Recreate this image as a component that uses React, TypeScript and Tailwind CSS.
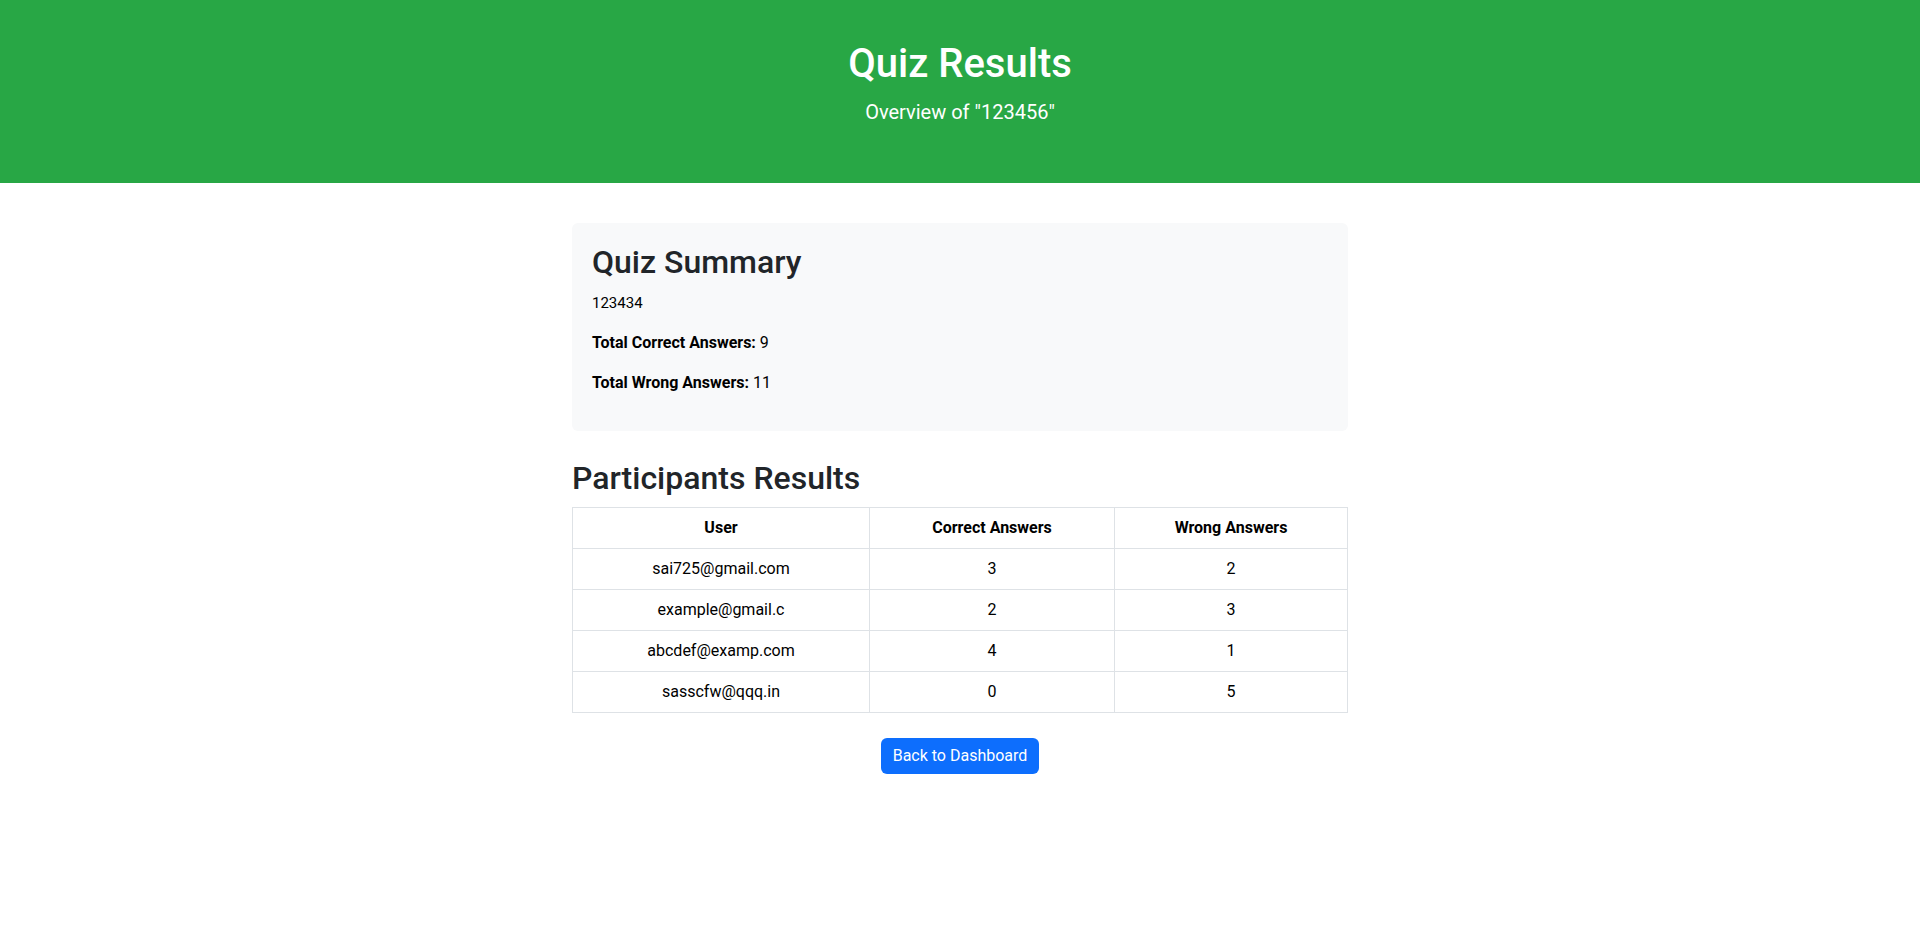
import React from 'react';

type Row = { user: string; correct: number; wrong: number };

const RESULTS: Row[] = [
  { user: 'sai725@gmail.com', correct: 3, wrong: 2 },
  { user: 'example@gmail.c', correct: 2, wrong: 3 },
  { user: 'abcdef@examp.com', correct: 4, wrong: 1 },
  { user: 'sasscfw@qqq.in', correct: 0, wrong: 5 },
];

const App: React.FC = () => {
  return (
    <div className="min-h-screen bg-white font-['Roboto',sans-serif] text-black">
      {/* Header */}
      <header className="bg-[#28a745] text-white text-center pt-10 pb-10">
        <h1 className="text-[40px] leading-[48px] font-medium mb-[9px]">Quiz Results</h1>
        <p className="text-[20px] leading-[30px] mb-4">Overview of "123456"</p>
      </header>

      <main className="max-w-[800px] mx-auto px-3 mt-10">
        {/* Summary card */}
        <section className="bg-[#f8f9fa] rounded-md p-5 mb-7">
          <h2 className="text-[32px] leading-[38px] font-medium text-[#212529] mb-[10px]">Quiz Summary</h2>
          <p className="text-[15px] leading-6 mb-4">123434</p>
          <p className="text-base leading-6 mb-4">
            <span className="font-bold">Total Correct Answers:</span> 9
          </p>
          <p className="text-base leading-6 mb-4">
            <span className="font-bold">Total Wrong Answers:</span> 11
          </p>
        </section>

        <h2 className="text-[32px] leading-[38px] font-medium text-[#212529] mb-[10px]">Participants Results</h2>
        <table className="w-full border-collapse text-center text-base leading-6">
          <thead>
            <tr>
              <th className="border border-[#dee2e6] px-2 py-2 font-bold">User</th>
              <th className="border border-[#dee2e6] px-2 py-2 font-bold">Correct Answers</th>
              <th className="border border-[#dee2e6] px-2 py-2 font-bold">Wrong Answers</th>
            </tr>
          </thead>
          <tbody>
            {RESULTS.map((r) => (
              <tr key={r.user}>
                <td className="border border-[#dee2e6] px-2 py-2 w-[297px]">{r.user}</td>
                <td className="border border-[#dee2e6] px-2 py-2 w-[245px]">{r.correct}</td>
                <td className="border border-[#dee2e6] px-2 py-2">{r.wrong}</td>
              </tr>
            ))}
          </tbody>
        </table>

        <div className="flex justify-center mt-[25px]">
          <button className="bg-[#0d6efd] text-white rounded-md px-3 py-1.5 text-base leading-6">
            Back to Dashboard
          </button>
        </div>
      </main>
    </div>
  );
};

export default App;
